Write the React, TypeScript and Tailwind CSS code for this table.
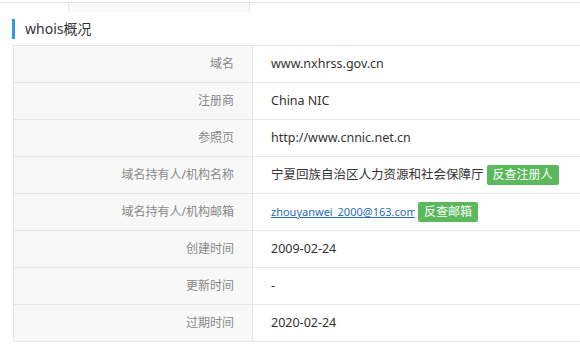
import type { ReactNode } from 'react';

interface Row {
  label: string;
  value: ReactNode;
}

const font = { fontFamily: '"Noto Sans", "Noto Sans CJK SC", sans-serif' };

function GreenButton({ children }: { children: ReactNode }) {
  return (
    <span className="ml-[3px] inline-flex h-[20px] shrink-0 items-center rounded-[2px] bg-[#5cb85c] px-[6px] text-[12px] leading-none text-white">
      {children}
    </span>
  );
}

const rows: Row[] = [
  { label: '域名', value: 'www.nxhrss.gov.cn' },
  { label: '注册商', value: 'China NIC' },
  { label: '参照页', value: 'http://www.cnnic.net.cn' },
  {
    label: '域名持有人/机构名称',
    value: (
      <span className="flex items-center">
        <span>宁夏回族自治区人力资源和社会保障厅</span>
        <GreenButton>反查注册人</GreenButton>
      </span>
    ),
  },
  {
    label: '域名持有人/机构邮箱',
    value: (
      <span className="flex items-center">
        <span className="inline-block w-[144px] overflow-hidden text-[11px] text-[#2a6cb5] underline">
          zhouyanwei_2000@163.com
        </span>
        <GreenButton>反查邮箱</GreenButton>
      </span>
    ),
  },
  { label: '创建时间', value: '2009-02-24' },
  { label: '更新时间', value: '-' },
  { label: '过期时间', value: '2020-02-24' },
];

export default function App() {
  return (
    <div className="h-[360px] w-[580px] overflow-hidden bg-white text-[#333]" style={font}>
      {/* tail of the section above */}
      <div className="mt-[2px] flex h-[10px] border-t border-[#e6e6e6]">
        <div className="w-[69px] border-r border-[#e6e6e6]" />
        <div className="w-[181px] border-r border-[#e6e6e6] bg-[#fafafa]" />
      </div>

      <div className="flex h-[33px] items-center pl-[12px]">
        <span className="h-[20px] w-[3px] bg-[#2d9be0]" />
        <span className="ml-[10px] text-[14px]">whois概况</span>
      </div>

      <div className="ml-[13px] border-l border-t border-[#e6e6e6]">
        {rows.map((r) => (
          <div key={r.label} className="flex h-[37px] border-b border-[#e6e6e6]">
            <div className="flex w-[239px] shrink-0 items-center justify-end border-r border-[#e6e6e6] bg-[#f8f8f8] pr-[18px] text-[12px] text-[#888]">
              {r.label}
            </div>
            <div className="flex items-center whitespace-nowrap pl-[18px] text-[12.5px]">{r.value}</div>
          </div>
        ))}
      </div>
    </div>
  );
}
